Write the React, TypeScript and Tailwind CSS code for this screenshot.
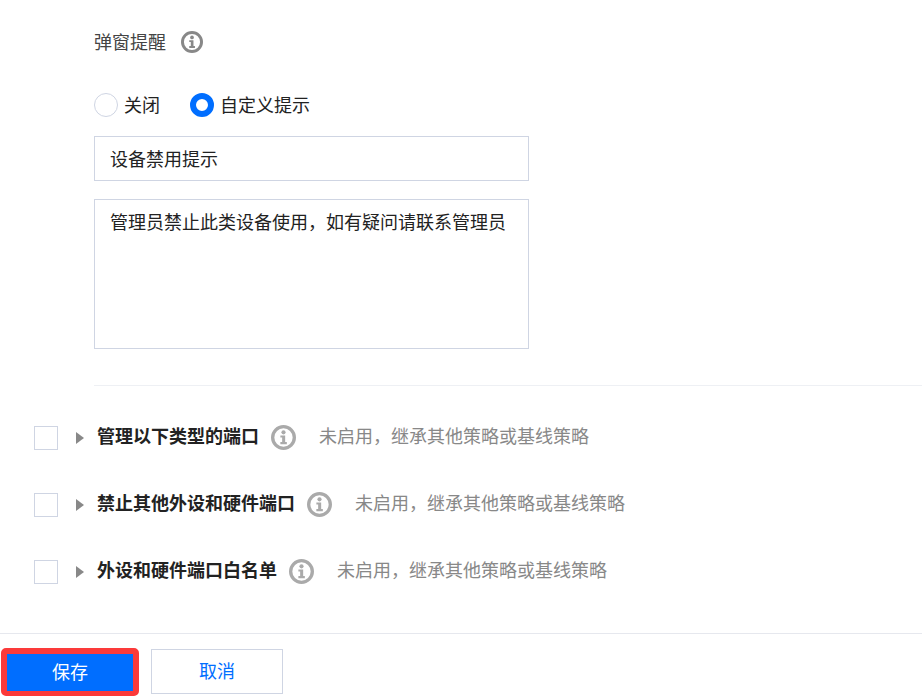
import React from 'react';

const InfoIcon = ({ className }: { className: string }) => (
  <svg viewBox="0 0 24 24" className={className} fill="none">
    <circle cx="12" cy="12" r="10.4" stroke="currentColor" strokeWidth="3.2" />
    <circle cx="12" cy="7" r="2" fill="currentColor" />
    <path d="M9 10h4.6v6.4h1.6v2.1H9v-2.1h1.7v-4.3H9z" fill="currentColor" />
  </svg>
);

const rows = ['管理以下类型的端口', '禁止其他外设和硬件端口', '外设和硬件端口白名单'];

const App: React.FC = () => {
  return (
    <div className="w-[922px] h-[696px] overflow-hidden bg-white text-[18px] leading-[26px] text-[#222] font-['Noto_Sans_CJK_SC','Noto_Sans',sans-serif]">
      <div className="h-[633px] pl-[34px]">
        <div className="pl-[60px] pt-[29px]">
          <div className="flex items-center h-[26px] text-[#444]">
            <span className="pb-[2px]">弹窗提醒</span>
            <InfoIcon className="ml-[15px] w-[22px] h-[22px] text-[#888]" />
          </div>

          <div className="flex items-center mt-[38px] h-[24px]">
            <span className="w-[24px] h-[24px] rounded-full border border-[#cfd5e3] bg-white" />
            <span className="ml-[6px] pb-[2px]">关闭</span>
            <span className="ml-[30px] w-[24px] h-[24px] rounded-full border-[6px] border-[#006eff] bg-white" />
            <span className="ml-[6px] pb-[2px]">自定义提示</span>
          </div>

          <div className="mt-[19px] w-[435px] h-[45px] border border-[#cfd5e3] px-[15px] flex items-center">
            <span className="pb-[1px]">设备禁用提示</span>
          </div>
          <div className="mt-[18px] w-[435px] h-[150px] border border-[#cfd5e3] px-[15px] pt-[8px]">
            管理员禁止此类设备使用，如有疑问请联系管理员
          </div>

          <div className="mt-[36px] h-px bg-[#eef0f4]" />
        </div>

        <div className="mt-[40px] flex flex-col gap-[43px]">
          {rows.map((title) => (
            <div key={title} className="flex items-center h-[24px]">
              <span className="w-[24px] h-[24px] border border-[#cfd5e3] bg-white" />
              <span className="ml-[18px] w-0 h-0 border-y-[6px] border-y-transparent border-l-[8px] border-l-[#888]" />
              <span className="ml-[13px] pb-[7px] font-bold text-[#222]">{title}</span>
              <InfoIcon className="ml-[12px] mb-[2px] w-[25px] h-[25px] text-[#aaa]" />
              <span className="ml-[23px] pb-[7px] text-[#888]">未启用，继承其他策略或基线策略</span>
            </div>
          ))}
        </div>
      </div>

      <div className="h-[63px] border-t border-[#e6e8ee] pt-[14px] pl-[1px] flex items-start gap-[12px]">
        <button className="w-[138px] h-[48px] rounded-[5px] border-[6px] border-b-[5px] border-[#fb3a3a] bg-[#006eff] text-white">
          <span className="block pb-[4px]">保存</span>
        </button>
        <button className="mt-[1px] w-[132px] h-[45px] border border-[#cfd5e3] bg-white text-[#006eff]">
          <span className="block pb-[3px]">取消</span>
        </button>
      </div>
    </div>
  );
};

export default App;
